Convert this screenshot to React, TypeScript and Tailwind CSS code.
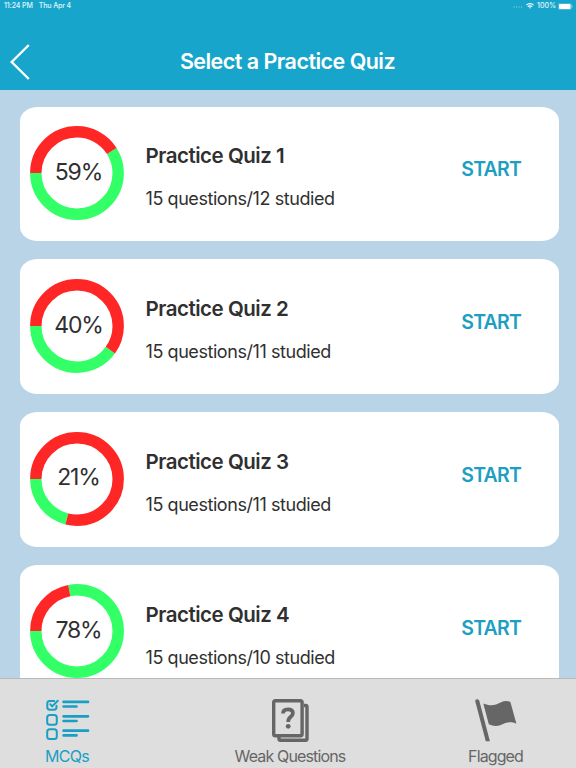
type Quiz = {
  title: string;
  percent: number;
  studied: number;
};

const quizzes: Quiz[] = [
  { title: 'Practice Quiz 1', percent: 59, studied: 12 },
  { title: 'Practice Quiz 2', percent: 40, studied: 11 },
  { title: 'Practice Quiz 3', percent: 21, studied: 11 },
  { title: 'Practice Quiz 4', percent: 78, studied: 10 },
];

function StatusBar() {
  return (
    <div className="flex h-3 items-center justify-between pl-1 pr-[3px] text-[7px] font-medium leading-3 text-white/90">
      <div className="flex gap-[6px] tracking-[-0.1px]">
        <span>11:24 PM</span>
        <span>Thu Apr 4</span>
      </div>
      <div className="flex items-center gap-[3px]">
        <svg width="10" height="4" viewBox="0 0 10 4" fill="#fff" opacity="0.4">
          <circle cx="1" cy="3" r="0.7" />
          <circle cx="3.5" cy="3" r="0.7" />
          <circle cx="6" cy="3" r="0.7" />
          <circle cx="8.5" cy="3" r="0.7" />
        </svg>
        <svg width="8" height="6" viewBox="0 0 8 6" fill="none" stroke="#fff" strokeWidth="1.2">
          <path d="M0.4 2.2a5.1 5.1 0 0 1 7.2 0" />
          <path d="M1.8 3.7a3.1 3.1 0 0 1 4.4 0" />
          <path d="M3 4.6L4 5.8L5 4.6a1.5 1.5 0 0 0-2 0z" fill="#fff" stroke="none" />
        </svg>
        <span className="-mr-px">100%</span>
        <svg width="15" height="7" viewBox="0 0 15 7">
          <rect x="0.3" y="0.3" width="13" height="6.4" rx="1.6" fill="none" stroke="#fff" strokeWidth="0.5" opacity="0.5" />
          <rect x="1" y="1" width="11.6" height="5" rx="1" fill="#fff" />
          <path d="M14 2.5v2" stroke="#fff" strokeWidth="0.8" opacity="0.6" />
        </svg>
      </div>
    </div>
  );
}

function ProgressRing({ percent }: { percent: number }) {
  return (
    <div className="relative -top-[0.8px] flex h-[94px] w-[94px] shrink-0 items-center justify-center">
      {/* Green starts at nine o'clock and runs counterclockwise, red takes the rest */}
      <svg className="absolute inset-0" width="94" height="94" viewBox="0 0 94 94" fill="none" strokeWidth="11.4">
        <g transform="translate(94 0) scale(-1 1)">
          <circle cx="47" cy="47" r="41.2" stroke="#33ff66" pathLength="100" strokeDasharray={`${percent} 100`} />
          <circle
            cx="47"
            cy="47"
            r="41.2"
            stroke="#ff2726"
            pathLength="100"
            strokeDasharray={`${100 - percent} 100`}
            strokeDashoffset={-percent}
          />
        </g>
      </svg>
      <span className="relative left-[1.5px] -top-[1.2px] text-[23px] leading-7 tracking-[-1.1px]">{percent}%</span>
    </div>
  );
}

function QuizCard({ quiz }: { quiz: Quiz }) {
  return (
    <div className="flex h-[134.5px] shrink-0 items-center rounded-[18px/14px] bg-white pl-[10.5px] pr-[38px] text-[#303030]">
      <ProgressRing percent={quiz.percent} />
      <div className="mt-2 ml-[21.5px] flex-1 whitespace-nowrap">
        <h2 className="text-[20.5px] font-semibold leading-7 tracking-[-0.48px]">{quiz.title}</h2>
        <p className="mt-[15px] text-[18px] leading-7 tracking-[-0.43px]">15 questions/{quiz.studied} studied</p>
      </div>
      <button className="relative -top-[4.6px] text-[19.5px] font-semibold leading-7 tracking-[-0.8px] text-[#1c9fc3]">START</button>
    </div>
  );
}

function ChecklistIcon() {
  return (
    <svg width="44" height="42" viewBox="0 0 44 42" fill="none" stroke="#1a9fc4" strokeLinecap="round" strokeLinejoin="round">
      <g strokeWidth="2">
        <path d="M8.2 2H3.7Q1.3 2 1.3 4.4V8.1Q1.3 10.7 3.7 10.7H8Q10.5 10.7 10.5 8.1V6.8" />
        <path d="M4.2 5.2L6.1 7.4L11.8 1.7" />
        <rect x="1.2" y="16" width="9.6" height="9.8" rx="2.5" />
        <rect x="1.2" y="30.3" width="9.6" height="9.8" rx="2.5" />
      </g>
      <path d="M17.6 2.9H42M17.6 7.5H30.5M17.6 17.3H42M17.6 22H30.5M17.6 31.7H42M17.6 36.4H30.5" strokeWidth="2.7" />
    </svg>
  );
}

function WeakIcon() {
  return (
    <svg width="38" height="44" viewBox="0 0 38 44" fill="none" stroke="#666" strokeWidth="3.4" strokeLinejoin="round">
      <path d="M32 6.5H33.5Q35 6.5 35 8V39.7Q35 41.2 33.5 41.2H8.5Q7 41.2 7 39.7V37.5" />
      <rect x="1.7" y="1.7" width="28.4" height="35" rx="1.8" />
      <path d="M11 14.6Q11 10.4 15.9 10.4Q20.9 10.4 20.9 14.1Q20.9 16.2 18.5 18Q16.2 19.7 16.2 22.9" strokeWidth="3.8" />
      <circle cx="16.2" cy="27.3" r="2.4" fill="#666" stroke="none" />
    </svg>
  );
}

function FlagIcon() {
  return (
    <svg width="42" height="43" viewBox="0 0 42 43">
      <path d="M0.3 2.4Q0 0.6 1.8 0.2Q3.7-.2 4.3 1.8L14.9 42.3H10.8Z" fill="#666" />
      <path d="M8.3 4.4C16 7.5 20.5 6 25.6 3.4Q31 0.8 35.4 3L41.4 24.8C35 22 31 23.8 25.7 26Q20 28.2 13.8 25.3Z" fill="#666" />
    </svg>
  );
}

export default function App() {
  return (
    <div className="flex h-[768px] w-[576px] flex-col overflow-hidden bg-[#b8d4e6] font-['Inter',sans-serif]">
      <header className="h-[90px] shrink-0 bg-[#17a5cb] text-white">
        <StatusBar />
        <div className="grid h-[78px] grid-cols-[1fr_auto_1fr] items-center">
          <button aria-label="Back" className="mt-[21px] ml-[10px]">
            <svg width="20" height="36" viewBox="0 0 20 36" fill="none" stroke="#fff" strokeWidth="2.4">
              <path d="M18.8 1L1.7 18L18.8 35" />
            </svg>
          </button>
          <h1 className="mt-[19px] mr-px text-[21.5px] font-semibold leading-7 tracking-[-0.53px]">Select a Practice Quiz</h1>
          <span />
        </div>
      </header>

      <main className="flex min-h-0 flex-1 flex-col gap-[18.3px] overflow-hidden pt-[16.6px] pr-[17px] pl-[19.5px]">
        {quizzes.map((quiz) => (
          <QuizCard key={quiz.title} quiz={quiz} />
        ))}
      </main>

      <nav className="grid h-[90px] shrink-0 grid-cols-[134px_312px_99px] border-t border-[#b9b9b9] bg-[#dedede] pt-5 text-[16px] leading-5 whitespace-nowrap text-[#666]">
        <button className="flex flex-col items-center text-[#1a9fc4]">
          <span className="ml-[2px] flex h-[47px]"><ChecklistIcon /></span>
          <span className="tracking-[-0.7px]">MCQs</span>
        </button>
        <button className="flex flex-col items-center">
          <span className="ml-[2px] flex h-[47px]"><WeakIcon /></span>
          <span className="tracking-[-0.85px]">Weak Questions</span>
        </button>
        <button className="flex flex-col items-center">
          <span className="flex h-[47px]"><FlagIcon /></span>
          <span className="tracking-[-0.9px]">Flagged</span>
        </button>
      </nav>
    </div>
  );
}
